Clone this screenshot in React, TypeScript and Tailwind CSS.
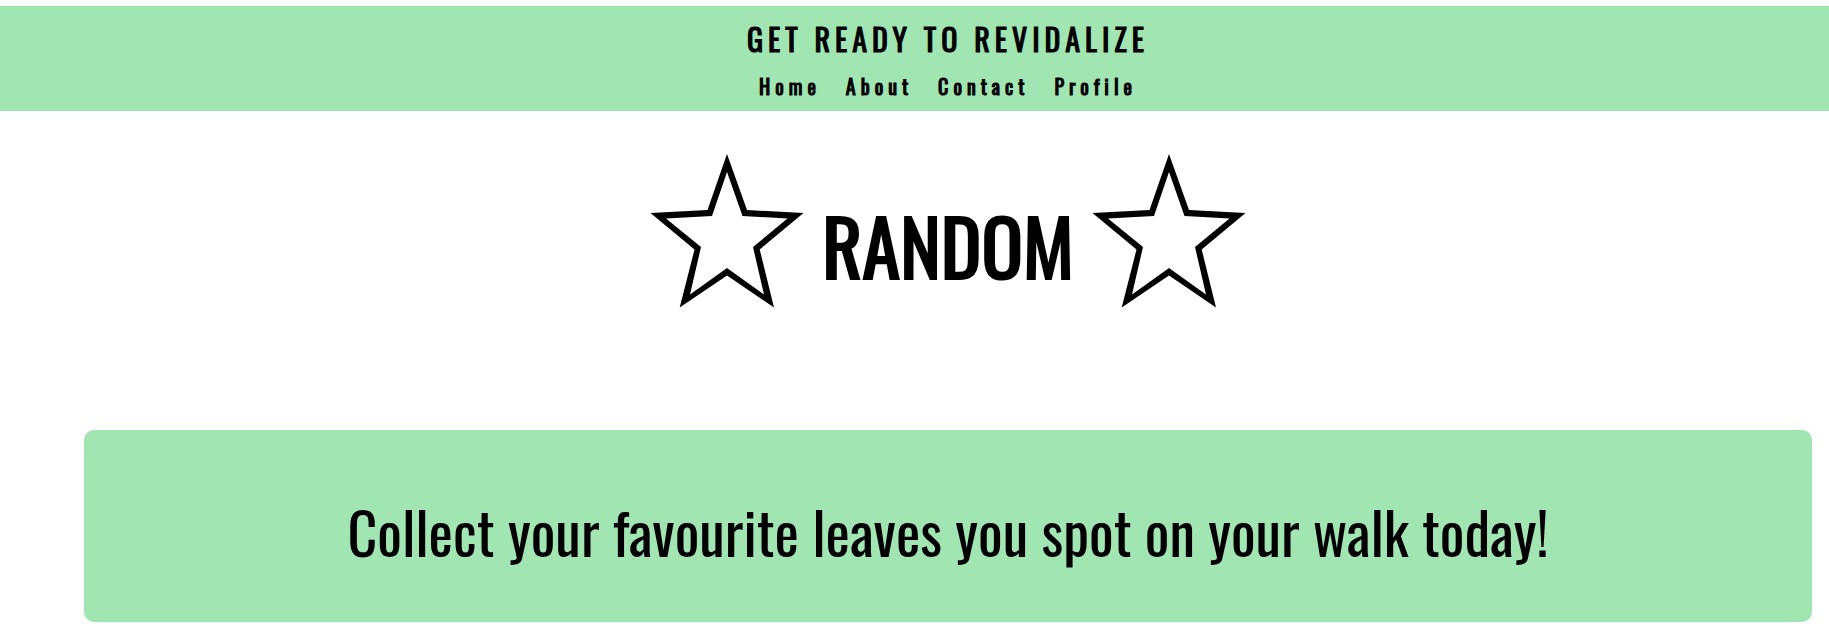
const links = ["Home", "About", "Contact", "Profile"];

function Star() {
  return (
    <svg viewBox="10 14 154 154" className="size-[154px] shrink-0" aria-hidden="true">
      <path
        fillRule="evenodd"
        d="M87 14L107 70L163.5 73L119.7 109.5L134 167.5L87 135.5L39.7 167.5L54.5 109.5L10.5 73L67.5 70ZM87 32L72 76L26 78.5L61 107L50 154.5L87 128L124 154.5L113 107L147.5 78.5L102.5 76Z"
      />
    </svg>
  );
}

export default function App() {
  return (
    <div className="bg-white pt-1.5 text-center font-['Oswald','Liberation_Sans_Narrow',sans-serif] text-black">
      <header className="bg-[#a0e5b2] pt-[9px] pb-0.5 pl-[67px]">
        <p className="text-[30px] leading-[48px] tracking-[5px] [-webkit-text-stroke:1px_black]">GET READY TO REVIDALIZE</p>
        <nav className="flex justify-center gap-[25px] text-xl leading-[46px] tracking-[5px] [-webkit-text-stroke:1px_black]">
          {links.map((link) => (
            <a key={link} href={"#" + link.toLowerCase()}>{link}</a>
          ))}
        </nav>
      </header>
      <main className="pr-[17px] pb-4 pl-[84px]">
        <div className="flex items-center justify-center gap-[18px] pt-[43px] pb-[122px]">
          <Star />
          <h1 className="pt-[26px] text-[77px] leading-none [-webkit-text-stroke:2px_black]">RANDOM</h1>
          <Star />
        </div>
        <section className="rounded-[10px] bg-[#a0e5b2] px-4 pt-[61px] pb-[51px]">
          <h2 className="text-[58px] leading-[80px]">Collect your favourite leaves you spot on your walk today!</h2>
        </section>
      </main>
    </div>
  );
}
